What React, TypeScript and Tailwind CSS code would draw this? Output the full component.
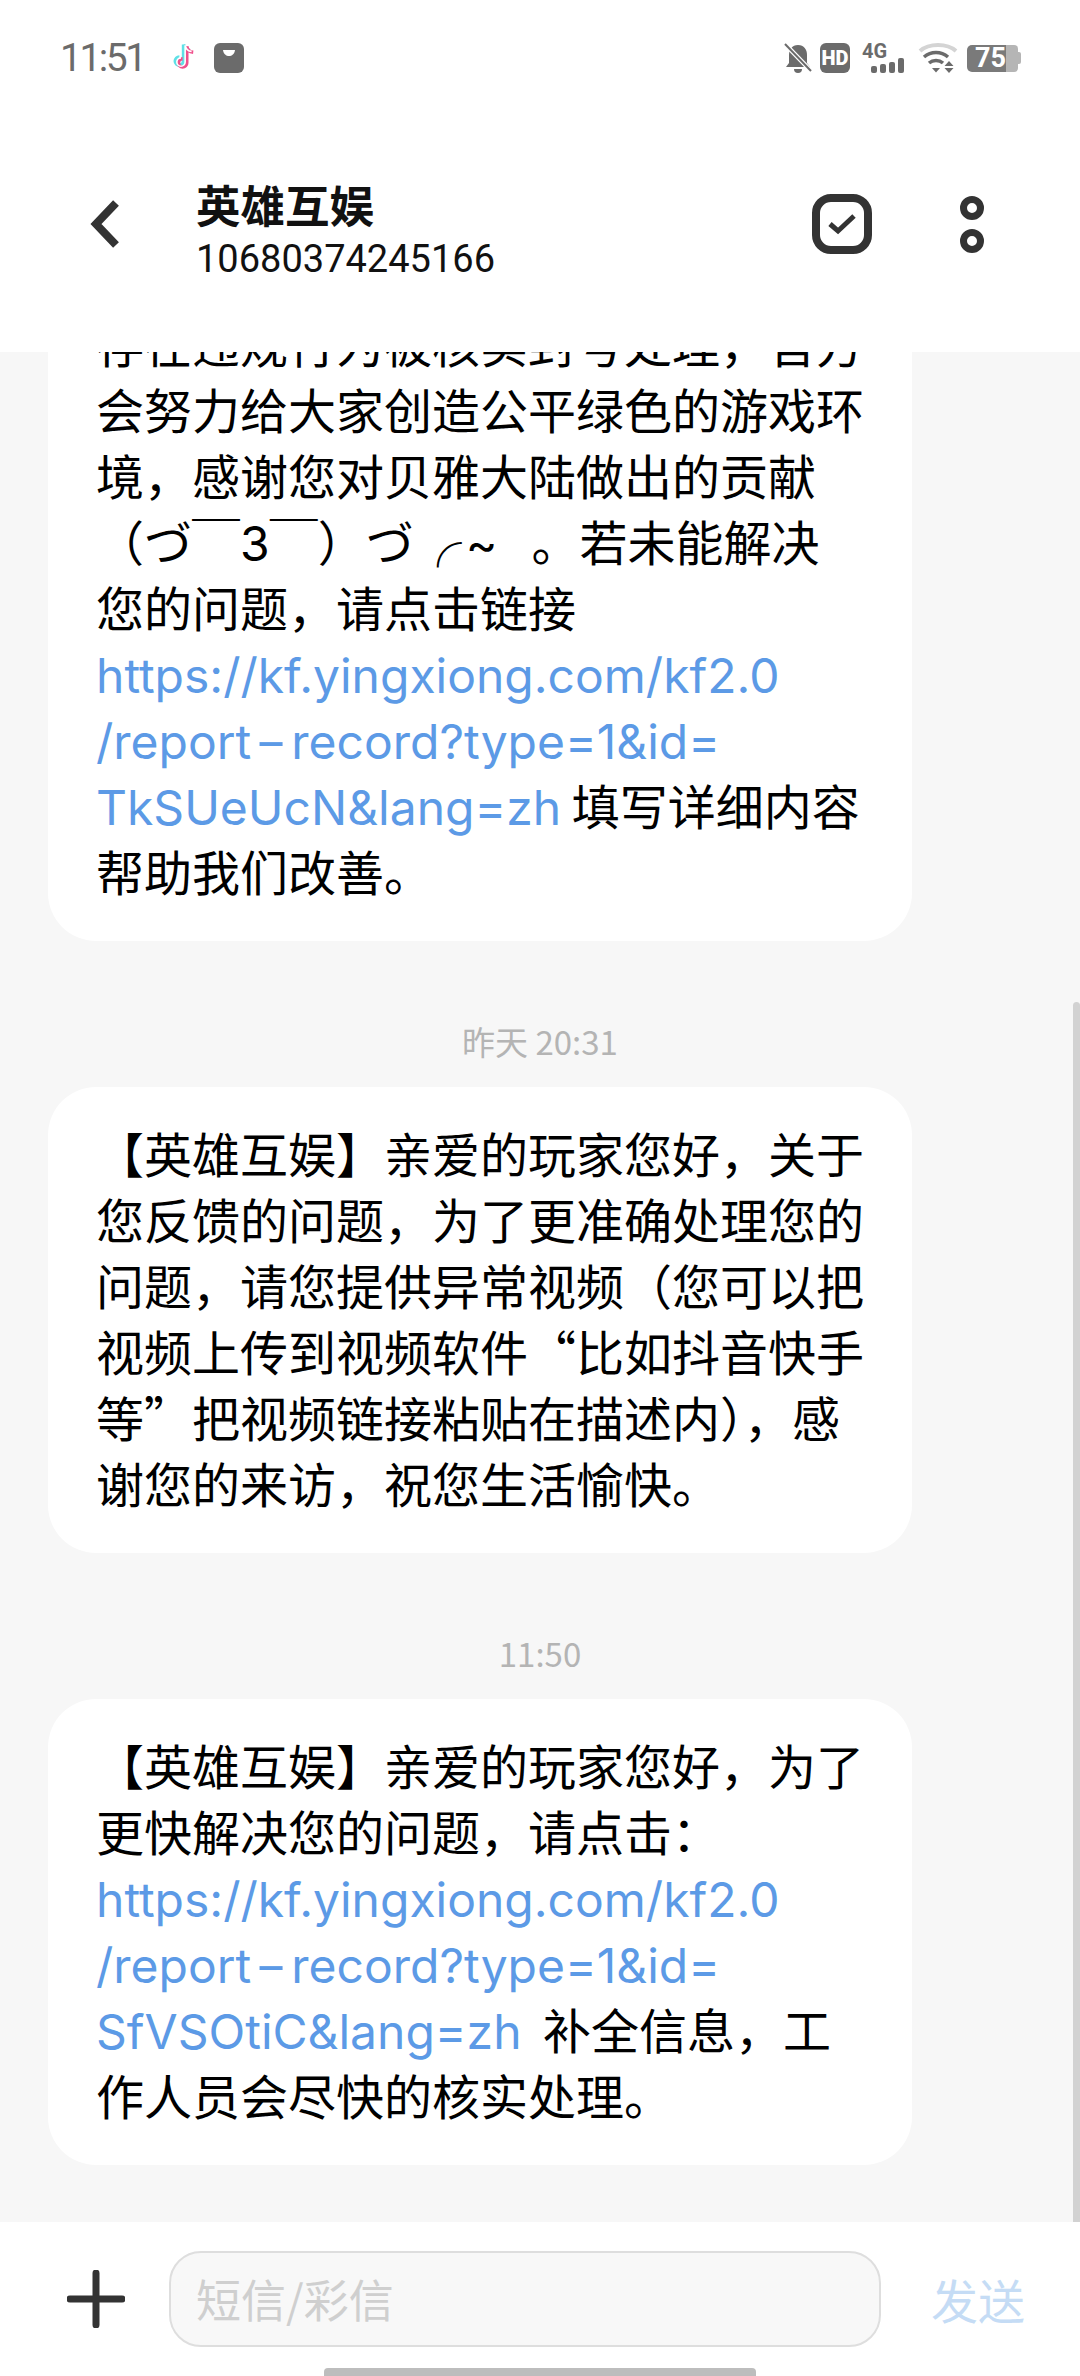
const Link = ({ children }: { children: React.ReactNode }) => (
  <span className="font-['Inter'] text-[#5c9ae6]">{children}</span>
);

const ReportPath = () => (
  <Link>
    /report
    <span className="mx-[9px] inline-block scale-x-150">-</span>
    record?type=1&id=
  </Link>
);

function TikTok() {
  const d = 'M13 2v14.5a3.6 3.6 0 1 1-3.6-3.6M13 2c.5 3 2.6 5 5.6 5.3';
  return (
    <svg viewBox="0 0 24 26" className="h-[30px] w-[28px]" fill="none" strokeWidth="3">
      <path d={d} stroke="#5fe0e6" transform="translate(-1.4 -.8)" />
      <path d={d} stroke="#f0508c" transform="translate(1.4 .8)" />
      <path d={d} stroke="#ffffff" strokeWidth="1.4" />
    </svg>
  );
}

function BellOff() {
  return (
    <svg viewBox="0 0 28 30" className="h-[30px] w-[28px]">
      <path d="M14 2c6 0 9 4.500 9 10v8l3 4H2l3-4v-8C5 6.500 8 2 14 2z" fill="#6b6b6b" />
      <path d="M10 26h8a4 4 0 0 1-8 0z" fill="#6b6b6b" />
      <path d="M1 1l26 27" stroke="#ffffff" strokeWidth="4.500" />
      <path d="M1 1l26 27" stroke="#6b6b6b" strokeWidth="2" />
    </svg>
  );
}

function Wifi() {
  return (
    <svg viewBox="0 0 40 30" className="h-[30px] w-[40px]" fill="none">
      <path d="M2 8C11 0 29 0 38 8" stroke="#d4d4d4" strokeWidth="4" />
      <path d="M6 14c7-6 17-6 24 0" stroke="#6b6b6b" strokeWidth="3.500" />
      <path d="M11 20c4-3.500 10-3.500 14 0" stroke="#6b6b6b" strokeWidth="3.500" />
      <path d="M14 25h8l-4 4.500z" fill="#6b6b6b" />
      <path d="M31 18l4.500 5h-9zM26.500 25h9L31 30z" fill="#6b6b6b" />
    </svg>
  );
}

function StatusBar() {
  return (
    <div className="flex h-[116px] items-center justify-between pl-[60px] pr-[59px] text-[#6b6b6b]">
      <div className="flex items-center">
        <span className="font-['Roboto'] text-[39px] leading-none tracking-[-2.5px]">11:51</span>
        <span className="ml-[25px]">
          <TikTok />
        </span>
        <span className="ml-[16px] flex h-[30px] w-[30px] justify-center rounded-[6px] bg-[#6b6b6b]">
          <svg viewBox="0 0 30 30" className="h-[30px] w-[30px]">
            <path d="M9 7c1 8 11 8 12 0z" fill="#ffffff" />
          </svg>
        </span>
      </div>
      <div className="flex items-center">
        <BellOff />
        <span className="ml-[8px] flex h-[30px] w-[30px] items-center justify-center rounded-[6px] bg-[#6b6b6b] font-['Roboto'] text-[20px] font-black leading-none text-white">
          HD
        </span>
        <div className="ml-[12px] flex h-[30px] w-[45px] flex-col">
          <span className="font-['Roboto'] text-[20px] font-bold leading-[16px]">4G</span>
          <div className="ml-[9px] flex h-[14px] items-end gap-[3px]">
            <i className="h-[7px] w-[6px] rounded-[2px] bg-[#6b6b6b]" />
            <i className="h-[9px] w-[6px] rounded-[2px] bg-[#6b6b6b]" />
            <i className="h-[11px] w-[6px] rounded-[2px] bg-[#6b6b6b]" />
            <i className="h-[15px] w-[6px] rounded-[2px] bg-[#6b6b6b]" />
          </div>
        </div>
        <span className="ml-[11px]">
          <Wifi />
        </span>
        <div className="ml-[9px] flex h-[27px] items-center">
          <div className="flex h-[27px] w-[39px] items-center justify-end rounded-l-[5px] bg-[#7a7a7a] font-['Roboto'] text-[27px] font-bold leading-none text-white">
            75
          </div>
          <div className="h-[27px] w-[12px] rounded-r-[4px] bg-[#b5b5b5]" />
          <div className="h-[12px] w-[3px] rounded-r-[2px] bg-[#b5b5b5]" />
        </div>
      </div>
    </div>
  );
}

function Header() {
  return (
    <div className="flex h-[236px] items-center pb-[20px] pl-[88px] pr-[96px]">
      <svg viewBox="0 0 34 50" className="h-[50px] w-[34px]" fill="none">
        <path d="M28 4L8 25l20 21" stroke="#333333" strokeWidth="8" />
      </svg>
      <div className="ml-[74px] mt-[15px] flex-1">
        <div className="text-[44.500px] font-bold leading-[52px] text-[#111111]">英雄互娱</div>
        <div className="mt-[3px] font-['Roboto'] text-[38px] leading-[52px] text-[#111111]">10680374245166</div>
      </div>
      <div className="mr-[88px] flex h-[60px] w-[60px] items-center justify-center rounded-[19px] border-[8px] border-[#333333]">
        <svg viewBox="0 0 28 22" className="h-[22px] w-[28px]" fill="none">
          <path d="M2 11l8 7L26 3" stroke="#333333" strokeWidth="5" />
        </svg>
      </div>
      <div className="flex flex-col gap-[9px]">
        <i className="h-[24px] w-[24px] rounded-full border-[7px] border-[#333333]" />
        <i className="h-[24px] w-[24px] rounded-full border-[7px] border-[#333333]" />
      </div>
    </div>
  );
}

function Bubble({ lines }: { lines: React.ReactNode[] }) {
  return (
    <div className="ml-[48px] w-[864px] shrink-0 rounded-[48px] bg-white px-[48px] pb-[38px] pt-[32px] text-[48px] leading-[66px] text-black">
      {lines.map((line, i) => (
        <div key={i} className="h-[66px] whitespace-pre">
          {line}
        </div>
      ))}
    </div>
  );
}

function Stamp({ text }: { text: string }) {
  return (
    <div className="flex h-[146px] shrink-0 items-end justify-center pb-[23px] text-[33px] leading-[46px] text-[#b4b4b4]">
      {text}
    </div>
  );
}

export default function App() {
  return (
    <div className="relative flex h-[2376px] w-[1080px] flex-col overflow-hidden bg-white font-['Noto_Sans_CJK_SC',sans-serif]">
      <StatusBar />
      <Header />

      <div className="flex flex-1 flex-col justify-end overflow-hidden bg-[#f7f7f7] pb-[57px]">
        <Bubble
          lines={[
            '存在违规行为被核实封号处理，官方',
            '会努力给大家创造公平绿色的游戏环',
            '境，感谢您对贝雅大陆做出的贡献',
            <>
              （づ￣<span className="font-['Inter']">3</span>￣）づ╭
              <span className="ml-[4px] font-['Inter']">~</span>
              <span className="ml-[34px]">。若未能解决</span>
            </>,
            '您的问题，请点击链接',
            <Link>https://kf.yingxiong.com/kf2.0</Link>,
            <ReportPath />,
            <>
              <Link>TkSUeUcN&lang=zh</Link> 填写详细内容
            </>,
            '帮助我们改善。',
          ]}
        />
        <Stamp text="昨天 20:31" />
        <Bubble
          lines={[
            '【英雄互娱】亲爱的玩家您好，关于',
            '您反馈的问题，为了更准确处理您的',
            '问题，请您提供异常视频（您可以把',
            '视频上传到视频软件“比如抖音快手',
            '等”把视频链接粘贴在描述内），感',
            '谢您的来访，祝您生活愉快。',
          ]}
        />
        <Stamp text="11:50" />
        <Bubble
          lines={[
            '【英雄互娱】亲爱的玩家您好，为了',
            '更快解决您的问题，请点击：',
            <Link>https://kf.yingxiong.com/kf2.0</Link>,
            <ReportPath />,
            <>
              <Link>SfVSOtiC&lang=zh</Link>  补全信息，工
            </>,
            '作人员会尽快的核实处理。',
          ]}
        />
      </div>

      <div className="relative flex h-[154px] items-start pl-[67px] pt-[29px]">
        <svg viewBox="0 0 58 58" className="mt-[19px] h-[58px] w-[58px]" fill="none">
          <path d="M29 3v52M3 29h52" stroke="#333333" strokeWidth="7" strokeLinecap="round" />
        </svg>
        <div className="ml-[44px] flex h-[96px] w-[712px] items-center rounded-[32px] border-2 border-[#dedede] bg-[#f8f8f8] pl-[25px] text-[45px] text-[#cfcfcf]">
          短信/彩信
        </div>
        <div className="ml-[50px] mt-[24px] text-[47px] leading-[48px] text-[#c5dcf5]">发送</div>
        <div className="absolute bottom-0 left-[324px] h-[8px] w-[432px] rounded-t-[4px] bg-[#bdbdbd]" />
      </div>

      <div className="absolute right-0 top-[1002px] h-[1220px] w-[7px] rounded-t-full bg-[#d2d2d2]" />
    </div>
  );
}
